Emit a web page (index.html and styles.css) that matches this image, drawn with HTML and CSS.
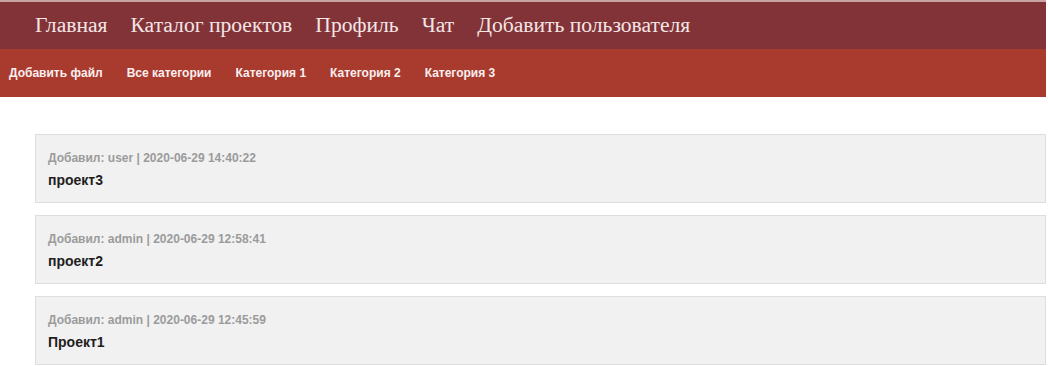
FILE: index.html
```html
<!DOCTYPE html>
<html>
<head>
    <title> Каталог проектов </title>
    <link rel="stylesheet" href="styles.css">
</head>
<body>
    <div class="page">
        <div class="topnav">
            <a href="#">Главная</a>
            <a href="#">Каталог проектов</a>
            <a href="#">Профиль</a>
            <a href="#">Чат</a>
            <a href="#">Добавить пользователя</a>
        </div>
        <div class="subnav">
            <a href="#">Добавить файл</a>
            <a href="#">Все категории</a>
            <a href="#">Категория 1</a>
            <a href="#">Категория 2</a>
            <a href="#">Категория 3</a>
        </div>

        <div class="projects">
            <div class="project">
                <div class="meta">Добавил: user | 2020-06-29 14:40:22</div>
                <div class="title">проект3</div>
            </div>
            <div class="project">
                <div class="meta">Добавил: admin | 2020-06-29 12:58:41</div>
                <div class="title">проект2</div>
            </div>
            <div class="project">
                <div class="meta">Добавил: admin | 2020-06-29 12:45:59</div>
                <div class="title">Проект1</div>
            </div>
        </div>
    </div>
</body>
</html>
```

FILE: styles.css
```css
* {
    margin: 0;
    padding: 0;
    box-sizing: border-box;
}

body {
    background: #fff;
    font-family: "Liberation Sans", Arial, sans-serif;
}

.page {
    width: calc(100% - 2px);
}

.topnav {
    background: #823338;
    border-top: 2px solid #c9a2a4;
    height: 49px;
    display: flex;
    align-items: center;
    gap: 23px;
    padding-left: 35px;
}

.topnav a {
    font-family: "Liberation Serif", "Times New Roman", serif;
    font-size: 21.6px;
    color: #f3e6e6;
    text-decoration: none;
}

.subnav {
    background: #a83b2e;
    height: 48px;
    display: flex;
    align-items: center;
    gap: 24px;
    padding-left: 9px;
}

.subnav a {
    font-size: 12px;
    font-weight: bold;
    color: #fbeeee;
    text-decoration: none;
}

.projects {
    padding: 37px 0 0 35px;
    display: flex;
    flex-direction: column;
    gap: 12px;
}

.project {
    background: #f1f1f1;
    border: 1px solid #dedede;
    height: 69px;
    padding: 16px 12px 0 12px;
}

.meta {
    font-size: 12px;
    font-weight: bold;
    color: #9b9b9b;
    line-height: 14px;
}

.title {
    font-size: 14px;
    font-weight: bold;
    color: #1e1e1e;
    margin-top: 6px;
    line-height: 18px;
}
```
